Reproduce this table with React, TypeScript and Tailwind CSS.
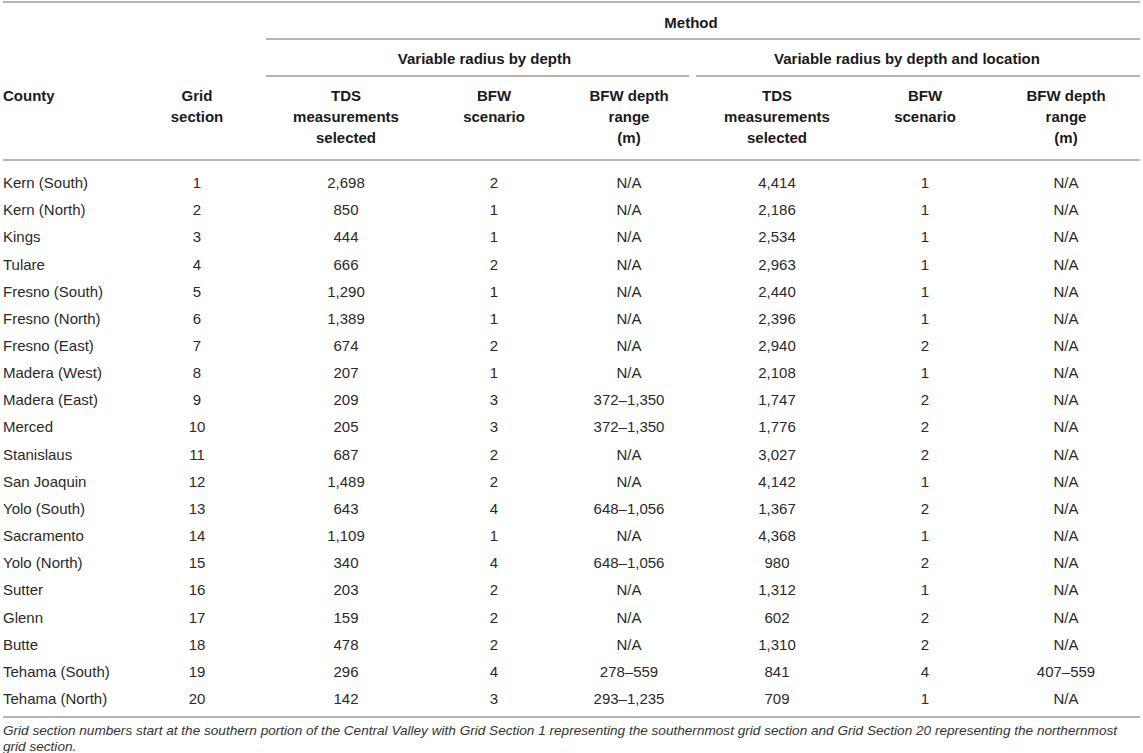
import React from "react";

const rows: [string, string, string, string, string, string, string, string][] = [
  ["Kern (South)", "1", "2,698", "2", "N/A", "4,414", "1", "N/A"],
  ["Kern (North)", "2", "850", "1", "N/A", "2,186", "1", "N/A"],
  ["Kings", "3", "444", "1", "N/A", "2,534", "1", "N/A"],
  ["Tulare", "4", "666", "2", "N/A", "2,963", "1", "N/A"],
  ["Fresno (South)", "5", "1,290", "1", "N/A", "2,440", "1", "N/A"],
  ["Fresno (North)", "6", "1,389", "1", "N/A", "2,396", "1", "N/A"],
  ["Fresno (East)", "7", "674", "2", "N/A", "2,940", "2", "N/A"],
  ["Madera (West)", "8", "207", "1", "N/A", "2,108", "1", "N/A"],
  ["Madera (East)", "9", "209", "3", "372–1,350", "1,747", "2", "N/A"],
  ["Merced", "10", "205", "3", "372–1,350", "1,776", "2", "N/A"],
  ["Stanislaus", "11", "687", "2", "N/A", "3,027", "2", "N/A"],
  ["San Joaquin", "12", "1,489", "2", "N/A", "4,142", "1", "N/A"],
  ["Yolo (South)", "13", "643", "4", "648–1,056", "1,367", "2", "N/A"],
  ["Sacramento", "14", "1,109", "1", "N/A", "4,368", "1", "N/A"],
  ["Yolo (North)", "15", "340", "4", "648–1,056", "980", "2", "N/A"],
  ["Sutter", "16", "203", "2", "N/A", "1,312", "1", "N/A"],
  ["Glenn", "17", "159", "2", "N/A", "602", "2", "N/A"],
  ["Butte", "18", "478", "2", "N/A", "1,310", "2", "N/A"],
  ["Tehama (South)", "19", "296", "4", "278–559", "841", "4", "407–559"],
  ["Tehama (North)", "20", "142", "3", "293–1,235", "709", "1", "N/A"],
];

const cols = "grid grid-cols-[125px_138px_160px_136px_134px_162px_134px_148px]";

function HeadCell({ lines }: { lines: string[] }) {
  return (
    <div className="flex flex-col items-center text-center">
      {lines.map((l) => (
        <span key={l} className="whitespace-nowrap">
          {l}
        </span>
      ))}
    </div>
  );
}

export default function App() {
  return (
    <div
      className="w-[1143px] h-[753px] overflow-hidden bg-white px-[3px] text-[15px] text-[#2a2a2a]"
      style={{ fontFamily: '"Liberation Sans", Arial, Helvetica, sans-serif' }}
    >
      <div className="mt-[1px] h-[2px] bg-[#b4b4b4]" />

      {/* Method row */}
      <div className={cols}>
        <div className="col-span-2" />
        <div className="col-span-6 flex flex-col">
          <div className="flex h-[35px] items-center justify-center pt-[5px] pr-[24px] font-bold text-[#1a1a1a]">
            Method
          </div>
          <div className="h-[2px] bg-[#b4b4b4]" />
        </div>
      </div>

      {/* Variable radius row */}
      <div className={cols}>
        <div className="col-span-2" />
        <div className="col-span-3 flex flex-col pr-[7px]">
          <div className="flex h-[35px] items-center justify-center pt-[4px] pl-[14px] font-bold text-[#1a1a1a]">
            Variable radius by depth
          </div>
          <div className="h-[2px] bg-[#b4b4b4]" />
        </div>
        <div className="col-span-3 flex flex-col">
          <div className="flex h-[35px] items-center justify-center pt-[4px] pr-[22px] font-bold text-[#1a1a1a]">
            Variable radius by depth and location
          </div>
          <div className="h-[2px] bg-[#b4b4b4]" />
        </div>
      </div>

      {/* Column headers */}
      <div className={`${cols} h-[82px] pt-[8px] font-bold leading-[21px] text-[#1a1a1a]`}>
        <div className="text-left">County</div>
        <HeadCell lines={["Grid", "section"]} />
        <HeadCell lines={["TDS", "measurements", "selected"]} />
        <HeadCell lines={["BFW", "scenario"]} />
        <HeadCell lines={["BFW depth", "range", "(m)"]} />
        <HeadCell lines={["TDS", "measurements", "selected"]} />
        <HeadCell lines={["BFW", "scenario"]} />
        <HeadCell lines={["BFW depth", "range", "(m)"]} />
      </div>
      <div className="h-[2px] bg-[#b4b4b4]" />

      {/* Body */}
      <div className="pt-[8px]">
        {rows.map((r) => (
          <div key={r[0]} className={`${cols} h-[27.16px] items-center leading-[27px]`}>
            {r.map((c, i) => (
              <div key={i} className={i === 0 ? "text-left whitespace-nowrap" : "text-center whitespace-nowrap"}>
                {c}
              </div>
            ))}
          </div>
        ))}
      </div>

      <div className="mt-[4px] h-[2px] bg-[#b4b4b4]" />
      <p className="mt-[5px] text-[13.6px] italic leading-[16px] text-[#333]">
        Grid section numbers start at the southern portion of the Central Valley with Grid Section 1 representing the
        southernmost grid section and Grid Section 20 representing the northernmost grid section.
      </p>
    </div>
  );
}
